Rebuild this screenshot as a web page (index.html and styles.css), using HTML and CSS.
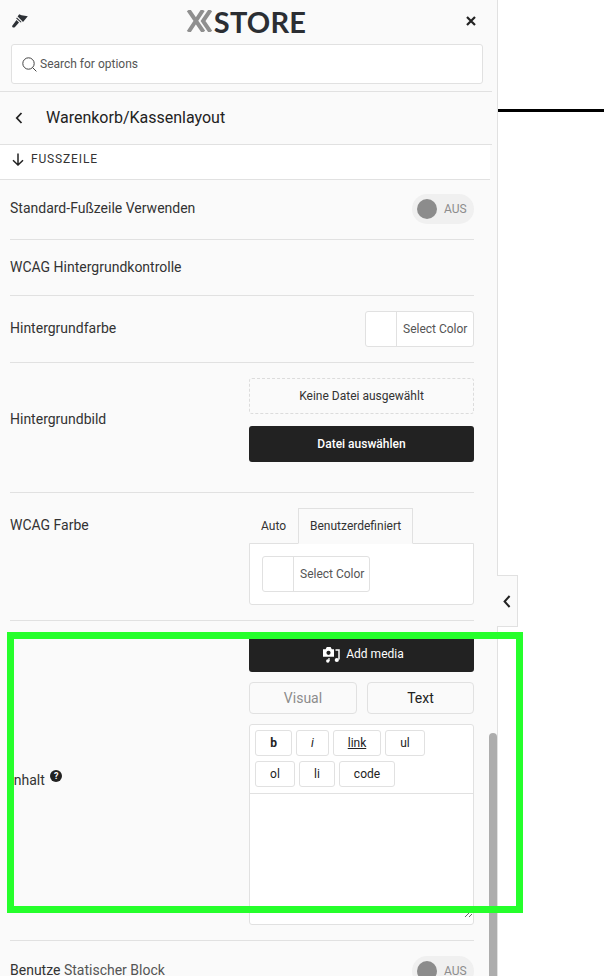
FILE: index.html
```html
<!DOCTYPE html>
<html lang="en">
<head>
    <meta charset="utf-8" />
    <meta name="viewport" content="width=device-width, initial-scale=1" />
    <title>XStore - Warenkorb/Kassenlayout</title>
    <link rel="stylesheet" href="styles.css">
</head>
<body>
    <aside class="panel">
        <div class="panel-top">
            <svg class="icon-brush" viewBox="0 0 16 14" width="16" height="14">
                <path d="M7.2 0.3 L9.6 1.2 L15.8 2.2 L11 8 L9.4 6.2 L5.6 2.6 Z" fill="#2d3136"/>
                <path d="M4.9 3.6 L9.6 7.9 L8.7 8.6 L4.2 4.5 Z" fill="#2d3136"/>
                <path d="M4.5 6.1 L7 8.4 L3 12.9 C2.2 13.9 0.9 13.7 0.4 13 C-0.1 12.3 0.2 11.4 1 10.7 Z" fill="#2d3136"/>
            </svg>
            <div class="logo">
                <svg class="logo-mark" viewBox="0 0 27 22" width="27" height="22">
                    <path d="M2.5 0 L17.5 22 M17 0 L2.5 22 M24.5 0 L17 11 L24.5 22" stroke="#8f8f8f" stroke-width="4" fill="none"/>
                </svg>
                <span class="logo-text">STORE</span>
            </div>
            <svg class="icon-close" viewBox="0 0 10 10" width="10" height="10">
                <path d="M1 1 L9 9 M9 1 L1 9" stroke="#222" stroke-width="2.2" fill="none"/>
            </svg>
        </div>

        <div class="search">
            <svg viewBox="0 0 15 15" width="15" height="15">
                <circle cx="6.5" cy="6.5" r="5.7" stroke="#444" stroke-width="1" fill="none"/>
                <path d="M10.6 10.6 L14.4 14.4" stroke="#444" stroke-width="1" fill="none"/>
            </svg>
            <span>Search for options</span>
        </div>

        <div class="section-title">
            <svg viewBox="0 0 8 12" width="8" height="12">
                <path d="M6.5 1 L1.8 6 L6.5 11" stroke="#222" stroke-width="1.8" fill="none"/>
            </svg>
            <h1>Warenkorb/Kassenlayout</h1>
        </div>

        <div class="group-title">
            <svg viewBox="0 0 12 13" width="12" height="13">
                <path d="M6 0.5 V12 M1 7.2 L6 12 L11 7.2" stroke="#222" stroke-width="1.5" fill="none"/>
            </svg>
            <span>FUSSZEILE</span>
        </div>

        <div class="options">
            <div class="row row-switch">
                <label>Standard-Fußzeile Verwenden</label>
                <div class="toggle"><i></i><span>AUS</span></div>
            </div>

            <div class="row row-plain">
                <label>WCAG Hintergrundkontrolle</label>
            </div>

            <div class="row row-color">
                <label>Hintergrundfarbe</label>
                <div class="color-pick"><i></i><span>Select Color</span></div>
            </div>

            <div class="row row-image">
                <label>Hintergrundbild</label>
                <div class="control">
                    <div class="file-name">Keine Datei ausgewählt</div>
                    <button class="btn-dark btn-file">Datei auswählen</button>
                </div>
            </div>

            <div class="row row-wcag">
                <label>WCAG Farbe</label>
                <div class="control">
                    <div class="tabs">
                        <span class="tab">Auto</span>
                        <span class="tab active">Benutzerdefiniert</span>
                    </div>
                    <div class="tab-body">
                        <div class="color-pick"><i></i><span>Select Color</span></div>
                    </div>
                </div>
            </div>

            <div class="row row-content">
                <label>Inhalt <b class="help">?</b></label>
                <div class="control">
                    <button class="btn-dark btn-media">
                        <svg viewBox="0 0 18 17" width="18" height="17">
                            <path d="M1 3.2 H3.6 L4.8 1 H8.6 L9.8 3.2 H12 V10.8 H1 Z" fill="#fff"/>
                            <circle cx="6.5" cy="6.8" r="2.1" fill="#222"/>
                            <path d="M13.5 4 H17 V13.5" stroke="#fff" stroke-width="1.5" fill="none"/>
                            <circle cx="14.8" cy="14" r="2.1" fill="#fff"/>
                            <path d="M7 12 V15" stroke="#fff" stroke-width="1.3"/>
                            <circle cx="5.8" cy="15" r="1.7" fill="#fff"/>
                        </svg>
                        <span>Add media</span>
                    </button>
                    <div class="mode-switch">
                        <button class="mode mode-off">Visual</button>
                        <button class="mode">Text</button>
                    </div>
                    <div class="editor">
                        <div class="toolbar">
                            <button class="tool tool-b">b</button>
                            <button class="tool tool-i">i</button>
                            <button class="tool tool-link">link</button>
                            <button class="tool tool-ul">ul</button>
                            <button class="tool tool-ol">ol</button>
                            <button class="tool tool-li">li</button>
                            <button class="tool tool-code">code</button>
                        </div>
                        <textarea></textarea>
                    </div>
                </div>
            </div>

            <div class="row row-switch">
                <label>Benutze <span class="muted">Statischer Block</span></label>
                <div class="toggle"><i></i><span>AUS</span></div>
            </div>
        </div>
    </aside>

    <main class="preview">
        <div class="preview-line"></div>
    </main>

    <!-- things that sit on top of the panel -->
    <div class="collapse-tab">
        <svg viewBox="0 0 8 13" width="8" height="13">
            <path d="M6.6 1 L1.6 6.5 L6.6 12" stroke="#222" stroke-width="2" fill="none"/>
        </svg>
    </div>
    <div class="scroll-thumb"></div>
    <div class="highlight"></div>
</body>
</html>
```

FILE: styles.css
```css
* {
    box-sizing: border-box;
}

html, body {
    height: 100%;
}

body {
    margin: 0;
    display: flex;
    height: 976px;
    overflow: hidden;
    background: #fff;
    color: #222;
    font-family: Roboto, "Liberation Sans", sans-serif;
    font-size: 14px;
}

button {
    font-family: inherit;
    cursor: pointer;
}

.panel {
    width: 498px;
    height: 976px;
    flex-shrink: 0;
    overflow: hidden;
    background: #fafafa;
    border-right: 1px solid #e1e1e1;
}

.panel-top {
    height: 44px;
    display: flex;
    align-items: center;
    justify-content: space-between;
    padding: 0 21px 2px 12px;
}

.logo {
    display: flex;
    align-items: center;
    height: 42px;
    margin-left: -2px;
}

.logo-mark {
    margin-right: 1px;
}

.logo-text {
    font-family: Lato, "Liberation Sans", sans-serif;
    font-weight: 700;
    font-size: 29px;
    line-height: 1;
    color: #2b2e33;
    letter-spacing: 0.2px;
}

.search {
    display: flex;
    align-items: center;
    gap: 3px;
    height: 40px;
    margin: 0 14px 7px 11px;
    padding-left: 10px;
    background: #fff;
    border: 1px solid #e1e1e1;
    border-radius: 3px;
    font-size: 12px;
    color: #555;
}

.section-title {
    display: flex;
    align-items: center;
    height: 54px;
    width: 492px;
    padding-left: 15px;
    border-top: 1px solid #e1e1e1;
    border-bottom: 1px solid #e1e1e1;
}

.section-title h1 {
    margin: 0 0 0 23px;
    font-size: 16px;
    font-weight: 400;
    line-height: 1;
    color: #222;
}

.group-title {
    display: flex;
    align-items: center;
    gap: 7px;
    width: 490px;
    height: 35px;
    padding: 0 0 6px 12px;
    background: #fff;
    border-bottom: 1px solid #e1e1e1;
    font-size: 12px;
    letter-spacing: 0.85px;
    color: #333;
}

.options {
    margin: 0 23px 0 10px;
}

.row {
    display: flex;
    align-items: center;
    justify-content: space-between;
    border-bottom: 1px solid #e1e1e1;
}

.row label {
    padding-bottom: 2px;
    color: #333;
}

.row-switch {
    height: 60px;
    padding-bottom: 1px;
}

.row-switch:last-child {
    border-bottom: 0;
}

.row-plain {
    height: 56px;
}

.row-color {
    height: 67px;
}

.row-image {
    padding: 15px 0 30px;
}

.row-wcag {
    align-items: flex-start;
    padding: 15px 0;
}

.row-wcag > label {
    margin-top: 9px;
}

.row-content {
    padding: 15px 0;
}

.row-content > label {
    padding-bottom: 4px;
}

.control {
    width: 225px;
}

.toggle {
    display: flex;
    align-items: center;
    gap: 7px;
    width: 62px;
    height: 30px;
    padding-left: 5px;
    background: #f0f0f0;
    border-radius: 15px;
    font-size: 12px;
    color: #8c8c8c;
}

.toggle i {
    width: 20px;
    height: 20px;
    border-radius: 50%;
    background: #8c8c8c;
}

.color-pick {
    display: flex;
    align-items: center;
    width: 109px;
    height: 36px;
    background: #fff;
    border: 1px solid #e1e1e1;
    border-radius: 3px;
    font-size: 12px;
    color: #555;
}

.color-pick i {
    width: 31px;
    height: 100%;
    border-right: 1px solid #e1e1e1;
}

.color-pick span {
    padding-left: 6px;
    white-space: nowrap;
}

.tab-body .color-pick {
    width: 108px;
}

.file-name {
    height: 36px;
    line-height: 34px;
    margin-bottom: 12px;
    text-align: center;
    border: 1px dashed #dcdcdc;
    border-radius: 3px;
    font-size: 12px;
    color: #333;
}

.btn-dark {
    display: flex;
    align-items: center;
    justify-content: center;
    width: 100%;
    height: 36px;
    padding: 0;
    background: #222;
    border: 0;
    border-radius: 3px;
    color: #fff;
    font-size: 12px;
    font-weight: 500;
}

.btn-media {
    gap: 6px;
    padding-left: 3px;
    margin-bottom: 10px;
    font-weight: 400;
}

.tabs {
    display: flex;
    height: 36px;
    margin-bottom: -1px;
    font-size: 12px;
}

.tab {
    padding: 0 12px;
    line-height: 36px;
    color: #333;
}

.tab.active {
    position: relative;
    padding: 0 11px;
    background: #fafafa;
    border: 1px solid #e1e1e1;
    border-bottom-color: #fafafa;
    line-height: 35px;
    z-index: 1;
}

.tab-body {
    height: 62px;
    padding: 12px;
    background: #fff;
    border: 1px solid #e1e1e1;
    border-radius: 0 0 3px 3px;
}

.mode-switch {
    display: flex;
    justify-content: space-between;
    margin-bottom: 10px;
}

.mode {
    width: 108px;
    height: 32px;
    padding: 0;
    background: #fafafa;
    border: 1px solid #e1e1e1;
    border-radius: 4px;
    font-size: 14px;
    color: #222;
}

.mode:last-child {
    width: 107px;
}

.mode-off {
    color: #8c8c8c;
}

.editor {
    background: #fff;
    border: 1px solid #e1e1e1;
    border-radius: 3px;
}

.toolbar {
    display: flex;
    flex-wrap: wrap;
    align-content: flex-start;
    gap: 5px 4px;
    height: 69px;
    padding: 5px 5px 0;
    border-bottom: 1px solid #e1e1e1;
}

.tool {
    height: 26px;
    padding: 0;
    background: #fff;
    border: 1px solid #e1e1e1;
    border-radius: 3px;
    font-size: 12px;
    color: #222;
}

.tool-b {
    width: 37px;
    font-weight: 700;
}

.tool-i {
    width: 33px;
    font-style: italic;
}

.tool-link {
    width: 48px;
    text-decoration: underline;
}

.tool-ul {
    width: 40px;
    margin-right: 40px;
}

.tool-ol {
    width: 40px;
}

.tool-li {
    width: 36px;
}

.tool-code {
    width: 56px;
}

.editor textarea {
    display: block;
    width: 100%;
    height: 124px;
    margin-bottom: 6px;
    padding: 0;
    background: #fff;
    border: 0;
    outline: 0;
}

.help {
    display: inline-block;
    width: 12px;
    height: 12px;
    margin-left: 2px;
    vertical-align: 6px;
    border-radius: 50%;
    background: #222;
    color: #fff;
    font-size: 9px;
    line-height: 12px;
    text-align: center;
}

.muted {
    color: #555;
}

.preview {
    flex: 1;
    background: #fff;
}

.preview-line {
    height: 3px;
    margin-top: 109px;
    background: #000;
}

.collapse-tab {
    position: absolute;
    left: 497px;
    top: 575px;
    width: 21px;
    height: 52px;
    display: flex;
    align-items: center;
    justify-content: center;
    background: #fafafa;
    border: 1px solid #e1e1e1;
    border-left: 0;
}

.scroll-thumb {
    position: absolute;
    left: 489px;
    top: 733px;
    width: 8px;
    height: 243px;
    background: #adadad;
    border-radius: 4px 4px 0 0;
}

.highlight {
    position: absolute;
    left: 7px;
    top: 632px;
    width: 516px;
    height: 281px;
    border: 7px solid #25ff2b;
}
```
